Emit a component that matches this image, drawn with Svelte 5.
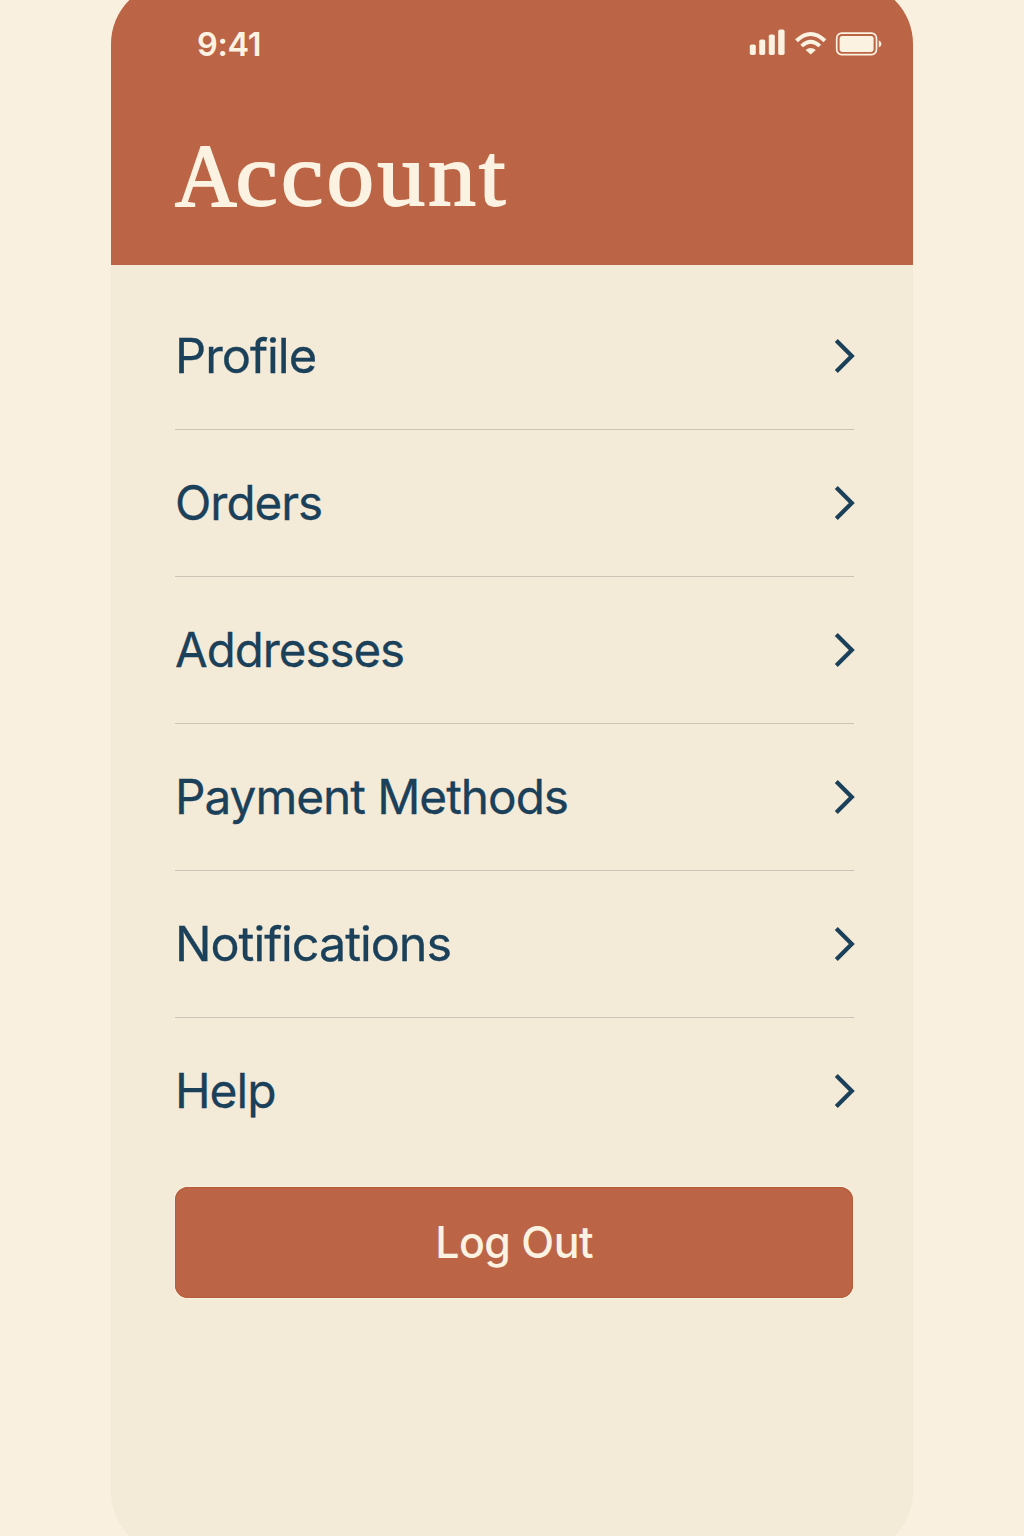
<script>
  const items = [
    { label: 'Profile', scale: 1.017 },
    { label: 'Orders', scale: 0.989 },
    { label: 'Addresses', scale: 0.987 },
    { label: 'Payment Methods', scale: 0.994 },
    { label: 'Notifications', scale: 1.01 },
    { label: 'Help', scale: 0.998 }
  ];
</script>

<main class="page">
  <section class="phone">
    <header class="header">
      <div class="status">
        <span class="time">9:41</span>
        <svg class="indicators" width="133" height="30" viewBox="0 0 133 30" aria-hidden="true">
          <g fill="currentColor">
            <rect x="1.8" y="14.4" width="6" height="10.6" rx="1.8" />
            <rect x="11.2" y="9.4" width="6" height="15.6" rx="1.8" />
            <rect x="20.8" y="4.4" width="6" height="20.6" rx="1.8" />
            <rect x="30.2" y="-0.4" width="6.4" height="25.4" rx="1.8" />
            <path d="M62.7 24.6 57.6 20.1Q62.7 15.8 67.8 20.1Z" />
            <rect x="91.6" y="6.1" width="34" height="15.8" rx="2.8" />
            <path d="M130.8 10.2Q133.4 11.2 133.4 14T130.8 17.4Z" />
          </g>
          <g fill="none" stroke="currentColor">
            <path d="M48.5 10.8Q62.7-2.8 76.9 10.8" stroke-width="4" />
            <path d="M53.6 16Q62.7 7.3 71.8 16" stroke-width="3.8" />
            <rect x="88.7" y="3.2" width="39.8" height="21.4" rx="5" stroke-width="1.7" />
          </g>
        </svg>
      </div>
      <h1 class="title"><span class="initial">A</span>ccount</h1>
    </header>

    <nav class="menu">
      {#each items as item}
        <button class="row" type="button">
          <span class="label" style:--scale={item.scale}>{item.label}</span>
          <svg class="chevron" width="22" height="36" viewBox="0 0 22 36" aria-hidden="true">
            <path d="M3.3 2.5 18.8 18 3.3 33.5" />
          </svg>
        </button>
      {/each}
    </nav>

    <button class="logout" type="button"><span>Log Out</span></button>
  </section>
</main>

<style>
  :global(body) {
    background: #f9f0df;
    overflow: hidden;
  }

  .page {
    height: 1536px;
    display: flex;
    justify-content: center;
    overflow: hidden;
    font-family: Inter, 'Liberation Sans', sans-serif;
  }

  .phone {
    box-sizing: border-box;
    flex: none;
    width: 802px;
    height: 1572px;
    margin-top: -18px;
    border-radius: 62px;
    background: #f3ead8;
    overflow: hidden;
  }

  .header {
    box-sizing: border-box;
    height: 283px;
    padding: 48px 32px 0 64px;
    background: #bb6546;
    color: #fcf2e2;
  }

  .status {
    display: flex;
    justify-content: space-between;
    height: 30px;
    padding-left: 22px;
  }

  .time {
    font-size: 32.5px;
    font-weight: 560;
    line-height: 30px;
    letter-spacing: -0.3px;
  }

  .indicators {
    display: block;
    overflow: visible;
  }

  .title {
    width: max-content;
    margin: 66px 0 0;
    font: 400 88px/100px 'Liberation Serif', serif;
    letter-spacing: 3.1px;
    transform: scaleX(1.08);
    transform-origin: left;
    -webkit-text-stroke: 1.8px currentColor;
  }

  .initial {
    display: inline-block;
    margin-right: -7.6px;
    letter-spacing: 0;
    transform: scaleX(0.9);
    transform-origin: left;
  }

  button {
    border: 0;
    font-family: inherit;
  }

  .menu {
    padding: 18px 58px 0 64px;
  }

  .row {
    position: relative;
    box-sizing: border-box;
    display: flex;
    align-items: center;
    justify-content: space-between;
    width: 100%;
    height: 147px;
    padding: 0 0 2px;
    background: none;
    color: #1b405a;
    text-align: left;
  }

  .row:not(:last-child)::after {
    content: '';
    position: absolute;
    left: 0;
    right: 1px;
    bottom: 0;
    height: 1px;
    background: #cbc5b9;
  }

  .label {
    font-size: 48px;
    line-height: 60px;
    letter-spacing: -1px;
    white-space: nowrap;
    transform: scaleX(var(--scale));
    transform-origin: left;
    -webkit-text-stroke: 0.3px currentColor;
  }

  .chevron {
    fill: none;
    stroke: currentColor;
    stroke-width: 4.2;
  }

  .logout {
    display: block;
    width: 678px;
    height: 111px;
    margin: 22px 0 0 64px;
    padding: 0 0 2px;
    border-radius: 13px;
    background: #bb6546;
    box-shadow:
      0 0 0 1px #f9f0e1,
      inset 0 0 0 1px #b65c39;
    color: #fcf2e2;
    font-size: 43.5px;
    font-weight: 530;
    letter-spacing: -0.5px;
  }

  .logout span {
    display: inline-block;
    transform: scaleX(0.985);
  }
</style>
